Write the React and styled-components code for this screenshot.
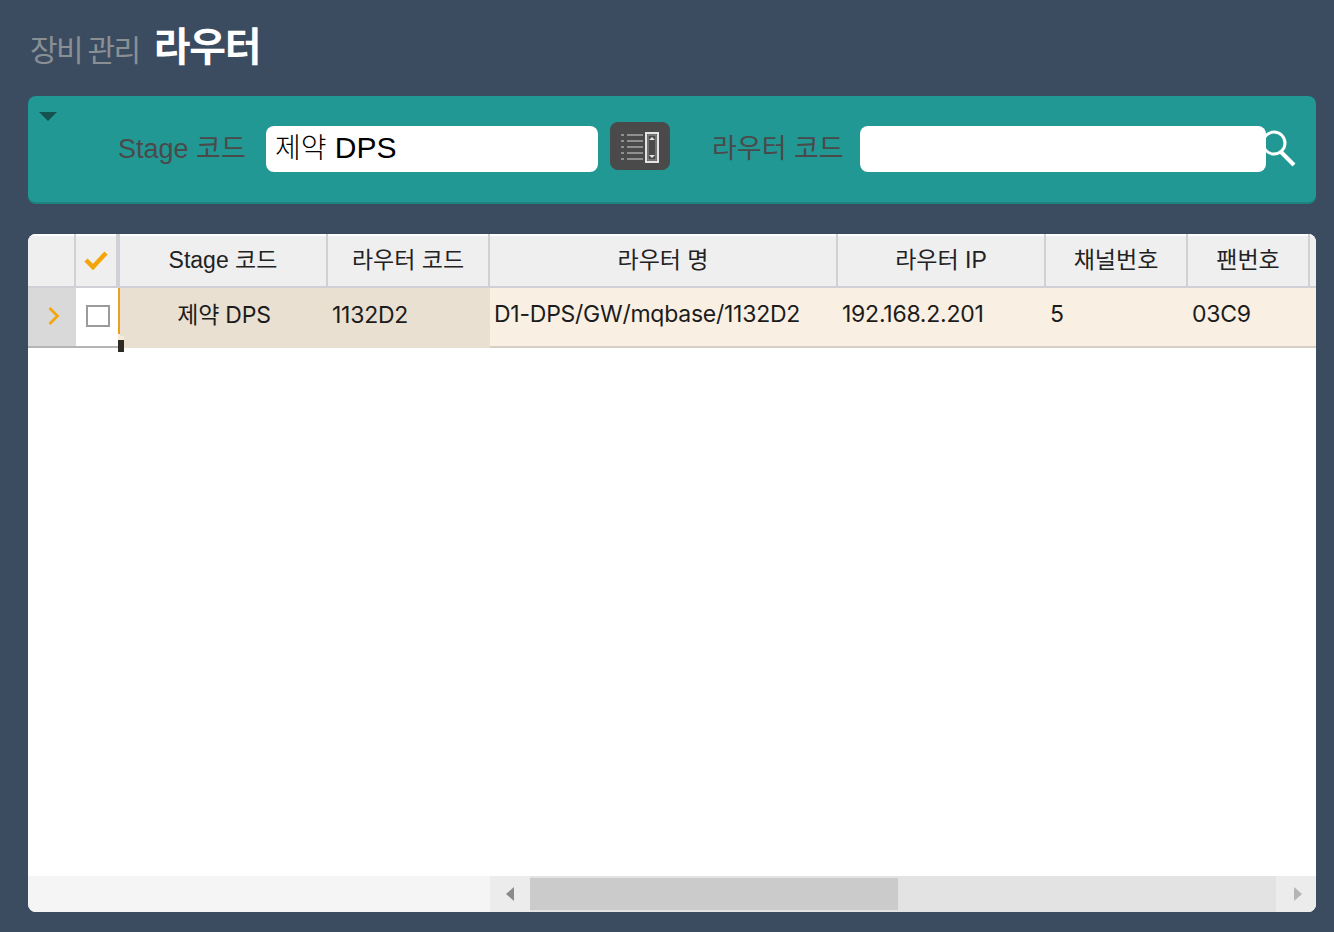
import React from "react";
import styled, { createGlobalStyle } from "styled-components";

const COLUMNS = "48px 42px 2px 208px 162px 348px 208px 142px 122px 1fr";
const SANS = '"Liberation Sans", "Noto Sans CJK KR", sans-serif';
const CELL = 'Inter, "Noto Sans CJK KR", sans-serif';

const headers = [
  { label: "Stage 코드" },
  { label: "라우터 코드" },
  { label: "라우터 명" },
  { label: "라우터 IP" },
  { label: "채널번호" },
  { label: "팬번호" },
  { label: "" },
];

function ListIcon() {
  return (
    <svg width="38" height="36" viewBox="0 0 38 36" fill="none">
      <g fill="#8f8f8f">
        <rect x="0" y="6" width="3" height="2" />
        <rect x="0" y="12" width="3" height="2" />
        <rect x="0" y="18" width="3" height="2" />
        <rect x="0" y="24" width="3" height="2" />
        <rect x="0" y="30" width="3" height="2" />
        <rect x="6" y="6" width="16" height="2" />
        <rect x="6" y="12" width="16" height="2" />
        <rect x="6" y="18" width="16" height="2" />
        <rect x="6" y="24" width="16" height="2" />
        <rect x="6" y="30" width="16" height="2" />
      </g>
      <rect x="25" y="5" width="12" height="29" stroke="#e4e4e4" strokeWidth="2" />
      <rect x="27" y="7" width="8" height="25" fill="#4a4a4a" stroke="#9a9a9a" strokeWidth="1" />
      <path d="M31 9l3 3h-6zM31 30l-3-3h6z" fill="#e4e4e4" />
    </svg>
  );
}

function App() {
  return (
    <Page>
      <GlobalStyle />
      <Title>
        <Crumb>장비 관리</Crumb>
        <Current>라우터</Current>
      </Title>
      <SearchPanel>
        <Toggle />
        <Label>Stage 코드</Label>
        <Field $width="332px">
          <FieldKo>제약</FieldKo> DPS
        </Field>
        <ListButton>
          <ListIcon />
        </ListButton>
        <Label $gap="41px">라우터 코드</Label>
        <Field $width="406px" />
        <SearchButton>
          <svg width="36" height="38" viewBox="0 0 36 38" fill="none" stroke="#fff">
            <circle cx="14" cy="14" r="11" strokeWidth="3" />
            <path d="M21 23l13 13" strokeWidth="4" />
          </svg>
        </SearchButton>
      </SearchPanel>
      <Grid>
        <HeaderRow>
          <HeadCell />
          <HeadCell $flush>
            <svg width="24" height="20" viewBox="0 0 24 20" fill="none">
              <path d="M2 10l7 7L22 3" stroke="#f4a50a" strokeWidth="4.5" />
            </svg>
          </HeadCell>
          <ThickLine />
          {headers.map((h, i) => (
            <HeadCell key={i}>{h.label}</HeadCell>
          ))}
        </HeaderRow>
        <DataRow>
          <ExpandCell>
            <svg width="14" height="20" viewBox="0 0 14 20" fill="none">
              <path d="M2.5 2l8 8-8 8" stroke="#f4a50a" strokeWidth="2.6" />
            </svg>
          </ExpandCell>
          <CheckCell>
            <CheckBox />
          </CheckCell>
          <OrangeLine />
          <Cell $frozen $center>
            제약 DPS
          </Cell>
          <Cell $frozen>1132D2</Cell>
          <Cell>D1-DPS/GW/mqbase/1132D2</Cell>
          <Cell>192.168.2.201</Cell>
          <Cell>5</Cell>
          <Cell>03C9</Cell>
          <Cell />
          <ResizeHandle />
        </DataRow>
        <Body />
        <ScrollRow>
          <ScrollFrozen />
          <ScrollTrack>
            <ScrollButton>
              <svg width="8" height="14" viewBox="0 0 8 14">
                <path d="M8 0v14L0 7z" fill="#8a8a8a" />
              </svg>
            </ScrollButton>
            <ScrollThumb />
            <ScrollSpacer />
            <ScrollButton $shift="4px">
              <svg width="8" height="14" viewBox="0 0 8 14">
                <path d="M0 0v14l8-7z" fill="#b5b5b5" />
              </svg>
            </ScrollButton>
          </ScrollTrack>
        </ScrollRow>
      </Grid>
    </Page>
  );
}

export default App;

const GlobalStyle = createGlobalStyle`
  html, body {
    margin: 0;
    padding: 0;
    background: #3b4c61;
  }
`;

const Page = styled.div`
  width: 1334px;
  height: 932px;
  box-sizing: border-box;
  padding: 0 18px 20px 28px;
  display: flex;
  flex-direction: column;
  font-family: ${SANS};
  overflow: hidden;
`;

const Title = styled.div`
  height: 96px;
  box-sizing: border-box;
  padding: 15px 0 0 2px;
  display: flex;
  align-items: baseline;
  gap: 14px;
`;

const Crumb = styled.span`
  font-family: "Noto Sans CJK KR", sans-serif;
  font-size: 30px;
  font-weight: 400;
  letter-spacing: -1.5px;
  color: #8a8f94;
`;

const Current = styled.span`
  font-family: "Noto Sans CJK KR", sans-serif;
  font-size: 40px;
  font-weight: 700;
  letter-spacing: -1.2px;
  color: #fff;
`;

const SearchPanel = styled.div`
  position: relative;
  height: 108px;
  box-sizing: border-box;
  padding: 30px 0 0 89px;
  display: flex;
  align-items: flex-start;
  background: #219894;
  border-bottom: 2px solid #1d8480;
  border-radius: 8px;
`;

const Toggle = styled.span`
  position: absolute;
  top: 16px;
  left: 11px;
  border-style: solid;
  border-width: 9px 9px 0;
  border-color: #14524f transparent transparent;
`;

const Label = styled.label`
  margin-left: ${(p) => p.$gap || "0"};
  width: 149px;
  height: 46px;
  line-height: 46px;
  text-indent: 1px;
  font-size: 27px;
  color: #4a4a4a;
  white-space: nowrap;
`;

const Field = styled.div`
  position: relative;
  z-index: 1;
  width: ${(p) => p.$width};
  height: 46px;
  box-sizing: border-box;
  padding-left: 9px;
  line-height: 41px;
  font-size: 30px;
  color: #000;
  background: #fff;
  border-radius: 8px;
`;

const FieldKo = styled.span`
  font-family: "Noto Sans CJK KR", sans-serif;
  font-weight: 300;
  font-size: 28px;
`;

const ListButton = styled.div`
  width: 60px;
  height: 48px;
  margin: -4px 0 0 12px;
  display: flex;
  align-items: center;
  justify-content: center;
  background: #4a4a4a;
  border-radius: 8px;
`;

const SearchButton = styled.div`
  margin: 3px 0 0 -6px;
  line-height: 0;
`;

const Grid = styled.div`
  flex: 1;
  margin-top: 30px;
  display: flex;
  flex-direction: column;
  background: #fff;
  border-radius: 8px;
  overflow: hidden;
`;

const HeaderRow = styled.div`
  display: grid;
  grid-template-columns: ${COLUMNS};
  height: 54px;
  box-sizing: border-box;
  background: #efeff0;
  border-bottom: 2px solid #d0d0d6;
  box-shadow: inset 0 2px 0 #fff;
`;

const HeadCell = styled.div`
  display: flex;
  align-items: center;
  justify-content: center;
  padding-bottom: ${(p) => (p.$flush ? "0" : "4px")};
  border-right: 2px solid #d0d0d6;
  font-size: 23px;
  color: #222;
  white-space: nowrap;

  &:last-child {
    border-right: 0;
  }
`;

const ThickLine = styled.div`
  background: #d0d0d6;
`;

const DataRow = styled.div`
  position: relative;
  display: grid;
  grid-template-columns: ${COLUMNS};
  height: 60px;
  box-sizing: border-box;
  border-bottom: 2px solid #d8cfc4;
  background: #f9efe3;
`;

const ExpandCell = styled.div`
  display: flex;
  align-items: center;
  justify-content: center;
  padding: 0 0 2px 4px;
  background: #d9d9d9;
  border-bottom: 2px solid #b5b5b5;
  margin-bottom: -2px;
`;

const CheckCell = styled.div`
  display: flex;
  align-items: center;
  justify-content: center;
  padding: 0 0 2px 2px;
  background: #fff;
  border-bottom: 2px solid #b5b5b5;
  margin-bottom: -2px;
`;

const CheckBox = styled.span`
  width: 24px;
  height: 22px;
  box-sizing: border-box;
  border: 2px solid #9b9b9b;
`;

const OrangeLine = styled.div`
  margin-bottom: 12px;
  background: #e9a11f;
`;

const Cell = styled.div`
  display: flex;
  align-items: center;
  justify-content: ${(p) => (p.$center ? "center" : "flex-start")};
  padding: 0 0 ${(p) => (p.$center ? "10px" : p.$frozen ? "6px" : "6px")} ${(p) => (p.$center ? "0" : "4px")};
  margin-bottom: ${(p) => (p.$frozen ? "-2px" : "0")};
  background: ${(p) => (p.$frozen ? "#e9e0d2" : "transparent")};
  font-family: ${CELL};
  font-size: 23px;
  letter-spacing: -0.25px;
  color: #1c1c1c;
  white-space: nowrap;
`;

const ResizeHandle = styled.span`
  position: absolute;
  left: 90px;
  top: 52px;
  width: 6px;
  height: 12px;
  background: #2f2a24;
  box-shadow: 0 -4px 0 #f5e9d8;
`;

const Body = styled.div`
  flex: 1;
  background: #fff;
`;

const ScrollRow = styled.div`
  display: flex;
  height: 36px;
`;

const ScrollFrozen = styled.div`
  width: 462px;
  background: #f5f5f5;
`;

const ScrollTrack = styled.div`
  flex: 1;
  display: flex;
  background: #e3e3e3;
`;

const ScrollButton = styled.div`
  width: 40px;
  box-sizing: border-box;
  padding-left: ${(p) => p.$shift || "0"};
  display: flex;
  align-items: center;
  justify-content: center;
  background: #ececec;
`;

const ScrollThumb = styled.div`
  width: 368px;
  margin: 2px 0;
  background: #cbcbcb;
`;

const ScrollSpacer = styled.div`
  flex: 1;
`;
